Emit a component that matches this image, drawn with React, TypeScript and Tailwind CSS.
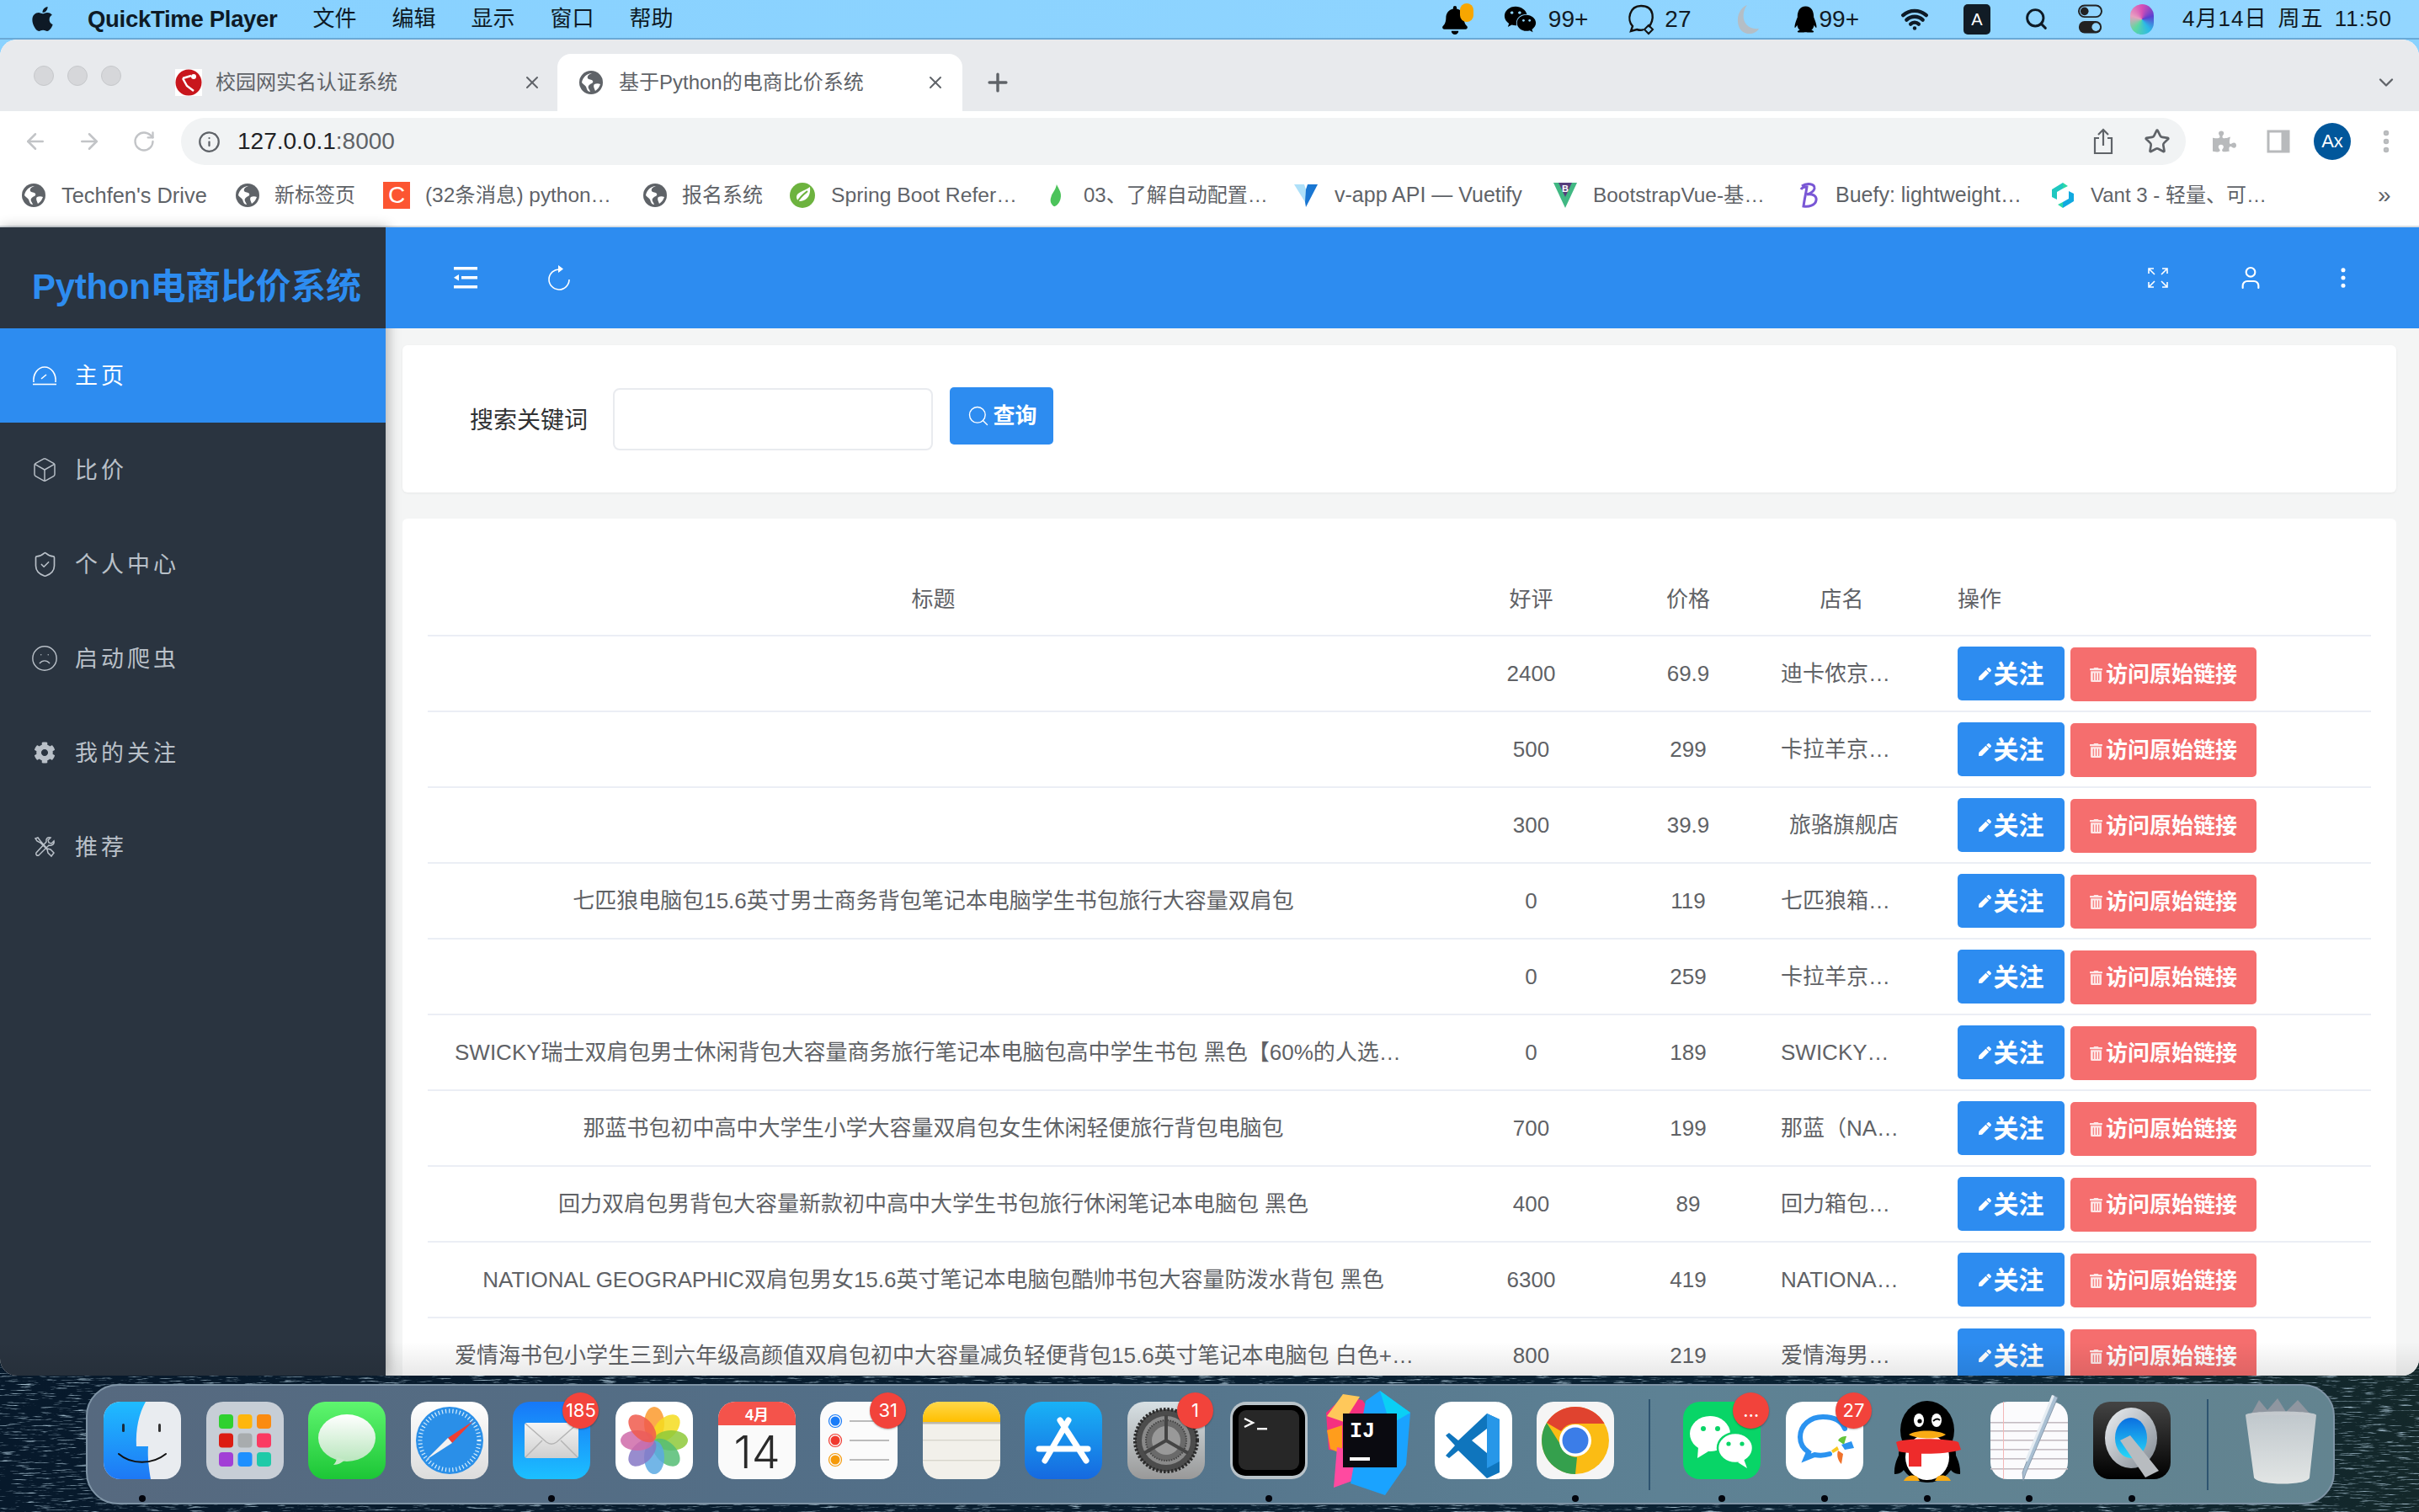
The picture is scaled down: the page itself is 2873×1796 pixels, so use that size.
import React from 'react';
import { Box, ShieldCheck, Frown, Star, MoreVertical, User, X, Plus, ChevronDown, ArrowLeft, ArrowRight, RotateCw, Info, Search, Wifi } from 'lucide-react';
import { FaApple, FaWeixin, FaQq, FaPuzzlePiece, FaCog, FaBell, FaTrashAlt, FaPen } from 'react-icons/fa';

const Globe = () => (
  <svg viewBox="0 0 28 28" className="w-[28px] h-[28px] shrink-0">
    <circle cx="14" cy="14" r="14" fill="#5f6368" />
    <path d="M15 3c-3 1-6 3-5 6 1 2 5 1 6 3s-1 3-3 4-3 3-2 5 2 3 2 4c-3 0-4-3-5-6-1-2-4-3-5-5 1-6 6-11 12-11zM18 16c2-1 5-1 7 0-1 3-3 6-6 8-1-3-3-6-1-8z" fill="#fff" />
  </svg>
);

const Spring = () => (
  <svg viewBox="0 0 32 32" className="w-[32px] h-[32px] shrink-0">
    <circle cx="16" cy="16" r="15" fill="#6db33f" />
    <path d="M25 6c1 8-2 16-11 17-3 0-5-2-5-5 0-6 8-6 16-12z" fill="#fff" />
    <path d="M10 24c3-6 7-9 12-13" stroke="#6db33f" strokeWidth="2" fill="none" />
  </svg>
);

const Leaf = () => (
  <svg viewBox="0 0 32 32" className="w-[30px] h-[32px] shrink-0">
    <path d="M17 2c2 5 7 10 5 18-1 5-4 9-8 10-4-2-6-7-4-12 1-5 6-9 7-16z" fill="#4cc35b" />
  </svg>
);

const Vuetify = () => (
  <svg viewBox="0 0 32 32" className="w-[32px] h-[32px] shrink-0">
    <path d="M2 3h12l4 12-3 9z" fill="#aee0f9" />
    <path d="M30 3H18l-2 6 0 0-1 15 1 6z" fill="#1976d2" />
  </svg>
);

const BVue = () => (
  <svg viewBox="0 0 30 32" className="w-[30px] h-[32px] shrink-0">
    <path d="M1 1h28L15 31z" fill="#41b883" />
    <path d="M7 1h16l-8 17z" fill="#563d7c" />
    <text x="15" y="12" fontSize="11" fontWeight="700" fill="#fff" textAnchor="middle">B</text>
  </svg>
);

const Buefy = () => (
  <svg viewBox="0 0 28 32" className="w-[28px] h-[32px] shrink-0">
    <path d="M6 5c6-4 16-3 15 3-1 4-6 6-9 7 6-1 12 1 11 7-1 6-9 8-15 7 1-8 3-16 4-23-3 0-6 1-7 3" fill="none" stroke="#7957d5" strokeWidth="3" />
  </svg>
);

const Vant = () => (
  <svg viewBox="0 0 30 32" className="w-[30px] h-[32px] shrink-0">
    <path d="M15 1v7l-7 4v9l-6-3V9z" fill="#1fc8c0" />
    <path d="M15 31v-7l7-4v-9l6 3v9z" fill="#10a9e0" />
    <path d="M15 1l6 4-6 3zM15 31l-6-4 6-3z" fill="#2bd8a8" />
  </svg>
);

const CIcon = () => (
  <div className="w-[32px] h-[32px] bg-[#fc5531] text-white text-[28px] leading-[32px] text-center shrink-0">C</div>
);

const bookmarks = [
  { icon: <Globe />, label: "Techfen's Drive", w: 'w-[254px]', s: 'text-[25.4px] ml-[1px]' },
  { icon: <Globe />, label: '新标签页', w: 'w-[175px]', s: 'text-[24px]' },
  { icon: <CIcon />, label: '(32条消息) python…', w: 'w-[309px]', s: 'text-[24.4px]' },
  { icon: <Globe />, label: '报名系统', w: 'w-[173px]', s: 'text-[24px]' },
  { icon: <Spring />, label: 'Spring Boot Refer…', w: 'w-[302px]', s: 'text-[24.7px]' },
  { icon: <Leaf />, label: '03、了解自动配置…', w: 'w-[296px]', s: 'text-[24px]' },
  { icon: <Vuetify />, label: 'v-app API — Vuetify', w: 'w-[309px]', s: 'text-[25px]' },
  { icon: <BVue />, label: 'BootstrapVue-基…', w: 'w-[290px]', s: 'text-[24.4px]' },
  { icon: <Buefy />, label: 'Buefy: lightweight…', w: 'w-[301px]', s: 'text-[25px]' },
  { icon: <Vant />, label: 'Vant 3 - 轻量、可…', w: 'w-[270px]', s: 'text-[24px]' },
];

const rows = [
  { t: '', g: '2400', p: '69.9', s: '迪卡侬京…' },
  { t: '', g: '500', p: '299', s: '卡拉羊京…' },
  { t: '', g: '300', p: '39.9', s: '旅骆旗舰店', c: true },
  { t: '七匹狼电脑包15.6英寸男士商务背包笔记本电脑学生书包旅行大容量双肩包', g: '0', p: '119', s: '七匹狼箱…' },
  { t: '', g: '0', p: '259', s: '卡拉羊京…' },
  { t: 'SWICKY瑞士双肩包男士休闲背包大容量商务旅行笔记本电脑包高中学生书包 黑色【60%的人选…', g: '0', p: '189', s: 'SWICKY…', l: true },
  { t: '那蓝书包初中高中大学生小学大容量双肩包女生休闲轻便旅行背包电脑包', g: '700', p: '199', s: '那蓝（NA…' },
  { t: '回力双肩包男背包大容量新款初中高中大学生书包旅行休闲笔记本电脑包 黑色', g: '400', p: '89', s: '回力箱包…' },
  { t: 'NATIONAL GEOGRAPHIC双肩包男女15.6英寸笔记本电脑包酷帅书包大容量防泼水背包 黑色', g: '6300', p: '419', s: 'NATIONA…' },
  { t: '爱情海书包小学生三到六年级高颜值双肩包初中大容量减负轻便背包15.6英寸笔记本电脑包 白色+…', g: '800', p: '219', s: '爱情海男…', l: true },
];

const Gauge = () => (
  <svg viewBox="0 0 30 24" className="w-[30px] h-[24px] shrink-0" fill="none" stroke="currentColor" strokeWidth="1.6">
    <path d="M2 20C1 10 7 2 15 2s14 8 13 18" />
    <path d="M1 22.5h28" />
    <path d="M11 16l6-5" />
  </svg>
);

const Tools = () => (
  <svg viewBox="0 0 26 26" className="w-[26px] h-[26px] shrink-0" fill="none" stroke="currentColor" strokeWidth="1.5">
    <path d="M2 3l3-1 3 4 8 9 4 1 4 4-3 4-4-4-1-4-8-8-4-2z" />
    <path d="M24 6l-3 3-3-1-1-3 3-3c-3-1-6 1-5 5L3 20c-1 2 1 4 3 3L18 11c3 1 7-1 6-5z" />
  </svg>
);

const nav = [
  { icon: <Gauge />, label: '主页', active: true },
  { icon: <Box size={32} strokeWidth={1.1} className="shrink-0" />, label: '比价' },
  { icon: <ShieldCheck size={33} strokeWidth={1.2} className="shrink-0" />, label: '个人中心' },
  { icon: <Frown size={34} strokeWidth={1} className="shrink-0" />, label: '启动爬虫' },
  { icon: <FaCog size={26} className="shrink-0" />, label: '我的关注' },
  { icon: <Tools />, label: '推荐' },
];

const Tile = ({ children, className = '' }: { children: React.ReactNode; className?: string }) => (
  <svg viewBox="0 0 92 92" className={'w-[92px] h-[92px] overflow-visible ' + className}>{children}</svg>
);

const Finder = () => (
  <Tile>
    <defs>
      <linearGradient id="fb" x1="0" y1="0" x2="0" y2="1"><stop offset="0" stopColor="#1fbcff" /><stop offset="1" stopColor="#1e78f5" /></linearGradient>
      <clipPath id="fc"><rect width="92" height="92" rx="20" /></clipPath>
    </defs>
    <g clipPath="url(#fc)">
      <rect width="92" height="92" fill="#e9ecf0" />
      <path d="M0 0h50C42 14 38 32 39 53h14c-1 13 1 27 3 39H0z" fill="url(#fb)" />
    </g>
    <rect x="22" y="26" width="3" height="10" rx="1.5" fill="#1a2a3a" />
    <rect x="65" y="26" width="3" height="10" rx="1.5" fill="#333" />
    <path d="M18 62c15 13 40 13 56 0" stroke="#111" strokeWidth="2" fill="none" strokeLinecap="round" />
  </Tile>
);

const Launchpad = () => {
  const c = ['#2fd12f', '#ffb60c', '#fb8b10', '#dc1c12', '#a8acae', '#fb3a62', '#a23fd6', '#1e90ff', '#1fcaa8'];
  return (
    <Tile>
      <rect width="92" height="92" rx="20" fill="#c7ced6" />
      {c.map((f, i) => (
        <rect key={i} x={15 + (i % 3) * 22.5} y={15 + Math.floor(i / 3) * 22.5} width="17" height="17" rx="4" fill={f} />
      ))}
    </Tile>
  );
};

const Messages = () => (
  <Tile>
    <defs>
      <linearGradient id="mg" x1="0" y1="0" x2="0" y2="1"><stop offset="0" stopColor="#5ff56f" /><stop offset="1" stopColor="#1cc636" /></linearGradient>
      <linearGradient id="mw" x1="0" y1="0" x2="0" y2="1"><stop offset="0" stopColor="#fff" /><stop offset="1" stopColor="#b9e6bd" /></linearGradient>
    </defs>
    <rect width="92" height="92" rx="20" fill="url(#mg)" />
    <ellipse cx="46" cy="43" rx="34" ry="28" fill="url(#mw)" />
    <path d="M34 66c0 4-2 7-4 9 6 0 10-3 14-6z" fill="#c6eac8" />
  </Tile>
);

const Safari = () => (
  <Tile>
    <defs><linearGradient id="sb" x1="0" y1="0" x2="0" y2="1"><stop offset="0" stopColor="#fff" /><stop offset="1" stopColor="#dcdcdc" /></linearGradient></defs>
    <rect width="92" height="92" rx="20" fill="url(#sb)" />
    <circle cx="46" cy="46" r="40" fill="#2a8fe8" />
    <circle cx="46" cy="46" r="35" fill="none" stroke="#d8eefc" strokeWidth="5" strokeDasharray="1.2 3" />
    <path d="M74 23L44 43l5 6z" fill="#ef3d32" />
    <path d="M18 69l26-26 5 6z" fill="#f2f2f2" />
  </Tile>
);

const Mail = () => (
  <Tile>
    <defs>
      <linearGradient id="mb" x1="0" y1="0" x2="0" y2="1"><stop offset="0" stopColor="#1778f8" /><stop offset="1" stopColor="#1cc0ff" /></linearGradient>
      <linearGradient id="me" x1="0" y1="0" x2="0" y2="1"><stop offset="0" stopColor="#f4f4f4" /><stop offset="1" stopColor="#cfcfcf" /></linearGradient>
    </defs>
    <rect width="92" height="92" rx="20" fill="url(#mb)" />
    <rect x="14" y="25" width="64" height="42" rx="3" fill="url(#me)" />
    <path d="M15 26l25 22c4 3 8 3 12 0l25-22M15 66l20-20M77 66L57 46" stroke="#b4b4b4" strokeWidth="1.5" fill="none" />
  </Tile>
);

const Photos = () => {
  const c = ['#fb9a2d', '#f5dc1e', '#8ec93a', '#55bd74', '#5ba9e3', '#8678c6', '#cf6ba9', '#f05a4c'];
  return (
    <Tile>
      <rect width="92" height="92" rx="20" fill="#fff" />
      {c.map((f, i) => (
        <ellipse key={i} cx="46" cy="26" rx="12" ry="20" fill={f} opacity="0.85" transform={`rotate(${i * 45} 46 46)`} />
      ))}
    </Tile>
  );
};

const Calendar = () => (
  <Tile>
    <defs><clipPath id="cc"><rect width="92" height="92" rx="20" /></clipPath></defs>
    <g clipPath="url(#cc)">
      <rect width="92" height="92" fill="#fafafa" />
      <rect width="92" height="28" fill="#f4534b" />
    </g>
    <text x="46" y="22" fontSize="18" fontWeight="700" fill="#fff" textAnchor="middle">4月</text>
    <text x="46" y="79" fontSize="54" fill="#2a2a2a" textAnchor="middle" fontWeight="300" fontFamily="Inter">14</text>
  </Tile>
);

const Reminders = () => (
  <Tile>
    <rect width="92" height="92" rx="20" fill="#fbfbfb" />
    {[['#1a7cf8', 23], ['#f0392f', 46], ['#f59a0a', 69]].map(([c, y]) => (
      <g key={String(c)}>
        <circle cx="18" cy={y as number} r="7.5" fill="none" stroke={c as string} strokeWidth="1.2" />
        <circle cx="18" cy={y as number} r="5.5" fill={c as string} />
        <rect x="35" y={(y as number) - 1} width="47" height="2" fill="#bbb" />
      </g>
    ))}
  </Tile>
);

const Notes = () => (
  <Tile>
    <defs><clipPath id="nc"><rect width="92" height="92" rx="20" /></clipPath>
      <linearGradient id="ny" x1="0" y1="0" x2="0" y2="1"><stop offset="0" stopColor="#ffd84a" /><stop offset="1" stopColor="#ffbf00" /></linearGradient></defs>
    <g clipPath="url(#nc)">
      <rect width="92" height="92" fill="#f2f0ea" />
      <rect width="92" height="24" fill="url(#ny)" />
      <rect y="24" width="92" height="2.5" fill="#bdb8a8" />
      <rect y="45" width="92" height="1.4" fill="#d8d5cc" />
      <rect y="69" width="92" height="1.4" fill="#d8d5cc" />
    </g>
  </Tile>
);

const AppStore = () => (
  <Tile>
    <defs><linearGradient id="ab" x1="0" y1="0" x2="0" y2="1"><stop offset="0" stopColor="#19b2f6" /><stop offset="1" stopColor="#1669e0" /></linearGradient></defs>
    <rect width="92" height="92" rx="20" fill="url(#ab)" />
    <path d="M52 22L24 70M42 22l31 48M17 56h58" stroke="#fff" strokeWidth="7" strokeLinecap="round" fill="none" />
  </Tile>
);

const SysPrefs = () => (
  <Tile>
    <defs><linearGradient id="sp" x1="0" y1="0" x2="0" y2="1"><stop offset="0" stopColor="#d7e0e4" /><stop offset="1" stopColor="#999" /></linearGradient></defs>
    <rect width="92" height="92" rx="20" fill="url(#sp)" />
    <circle cx="46" cy="46" r="37" fill="#4c4c4c" stroke="#2a2a2a" strokeWidth="4" strokeDasharray="2.5 2" />
    <circle cx="46" cy="46" r="29" fill="#8a8a8a" />
    <circle cx="46" cy="46" r="24" fill="#6a6a6a" stroke="#444" strokeWidth="2" strokeDasharray="1.5 1.5" />
    <circle cx="46" cy="46" r="17" fill="#999" />
    <path d="M46 46L46 16M46 46L72 61M46 46L20 61" stroke="#444" strokeWidth="4" />
  </Tile>
);

const Terminal = () => (
  <Tile>
    <rect width="92" height="92" rx="19" fill="#b9c3c9" />
    <rect x="3" y="4" width="86" height="84" rx="15" fill="#000" />
    <rect x="10" y="10" width="72" height="71" rx="9" fill="#272727" />
    <path d="M17 20l10 5-10 5" stroke="#fff" strokeWidth="2.4" fill="none" />
    <rect x="32" y="31" width="12" height="2.4" fill="#fff" />
  </Tile>
);

const IJ = () => (
  <Tile>
    <path d="M-7 13L14-6l22 4 10 14-20 50-30-5z" fill="#f5317f" />
    <path d="M-6 17L13-9l20 3L14 24z" fill="#ffc85a" />
    <path d="M-6 34l18-6 0 34-14-6z" fill="#ff9d1c" />
    <path d="M6 54l46 10-28 30L2 102z" fill="#ff4aa0" />
    <path d="M40-1l17-12 36 26-5 62-25 36-41-14z" fill="#1aa3ff" />
    <path d="M57-13l36 26-24 14z" fill="#0bd0f5" />
    <rect x="13" y="14" width="64" height="64" fill="#0a0a10" />
    <text x="21" y="42" fontSize="25" fontWeight="700" fill="#fff" fontFamily="Liberation Mono">IJ</text>
    <rect x="21" y="66" width="24" height="4" fill="#fff" />
  </Tile>
);

const VSCode = () => (
  <Tile>
    <rect width="92" height="92" rx="20" fill="#fff" />
    <path d="M62 14L28 46l-11-9-4 3 11 12-11 12 4 3 11-9 34 33 15-7V21z" fill="#0f75bd" />
    <path d="M62 14l15 7v50l-15 8 0-19V32z" fill="#2797e8" />
    <path d="M62 32L44 46l18 15z" fill="#fff" />
  </Tile>
);

const Chrome = () => (
  <Tile>
    <rect width="92" height="92" rx="20" fill="#f5f5f5" />
    <circle cx="46" cy="46" r="40" fill="#fbbc14" />
    <path d="M46 6a40 40 0 0 1 34.6 20H46a20 20 0 0 0-17 9L12 25A40 40 0 0 1 46 6z" fill="#e0432f" />
    <path d="M12 25l17 27a20 20 0 0 0 19 14L46 86A40 40 0 0 1 12 25z" fill="#35a04d" />
    <circle cx="46" cy="46" r="19" fill="#fff" />
    <circle cx="46" cy="46" r="15.5" fill="#3b7de8" />
  </Tile>
);

const WeChat = () => (
  <Tile>
    <rect width="92" height="92" rx="20" fill="#08d567" />
    <ellipse cx="32" cy="38" rx="24" ry="21" fill="#fff" />
    <path d="M18 54l-1 13 13-8z" fill="#fff" />
    <circle cx="24" cy="32" r="3" fill="#08d567" /><circle cx="41" cy="32" r="3" fill="#08d567" />
    <ellipse cx="62" cy="55" rx="21" ry="18" fill="#fff" stroke="#08d567" strokeWidth="2.5" />
    <path d="M72 68l4 11-11-7z" fill="#fff" />
    <circle cx="54" cy="50" r="2.6" fill="#08d567" /><circle cx="70" cy="50" r="2.6" fill="#08d567" />
  </Tile>
);

const Qiye = () => (
  <Tile>
    <rect width="92" height="92" rx="20" fill="#fff" />
    <path d="M70 32C66 22 56 18 44 18c-15 0-27 10-27 24 0 8 4 14 10 18l-3 7 10-4c6 1 12 1 18-1" fill="none" stroke="#2b93f0" strokeWidth="6" strokeLinecap="round" />
    <path d="M62 46c2-4 6-5 10-5l-3 10z" fill="#64c43a" />
    <path d="M66 51l12-4 3 8-11 2z" fill="#2b93f0" />
    <path d="M62 58l6 4-2 12c-4-4-6-10-4-16z" fill="#f0722b" />
    <path d="M54 58l7-5 2 4-7 4z" fill="#f9c820" />
  </Tile>
);

const QQ = () => (
  <Tile>
    <ellipse cx="46" cy="34" rx="32" ry="35" fill="#000" />
    <path d="M20 50c-8 12-14 24-13 36 8 0 12-5 14-10zM72 50c8 12 14 24 13 36-8 0-12-5-14-10z" fill="#000" />
    <ellipse cx="46" cy="62" rx="34" ry="34" fill="#000" />
    <ellipse cx="46" cy="66" rx="26" ry="27" fill="#fff" />
    <path d="M9 48c10-5 60-5 74 0l3 9c-20 6-55 6-74 2z" fill="#ee2b2b" />
    <rect x="24" y="56" width="15" height="21" fill="#ee2b2b" />
    <path d="M18 94c3-6 10-8 16-5l3 5zM74 94c-3-6-10-8-16-5l-3 5z" fill="#f9ab14" />
    <ellipse cx="36" cy="22" rx="6" ry="8" fill="#fff" /><ellipse cx="57" cy="22" rx="6" ry="8" fill="#fff" />
    <circle cx="37" cy="23" r="2.6" fill="#000" />
    <path d="M53 23c3-3 6-3 8-1" stroke="#000" strokeWidth="1.8" fill="none" />
    <path d="M24 39c10-6 34-6 44 0-8 6-34 6-44 0z" fill="#f9ab14" />
  </Tile>
);

const TextEdit = () => (
  <Tile>
    <rect width="92" height="92" rx="20" fill="#fbfbfd" />
    {[24, 34, 45, 56, 67, 79].map((y) => <rect key={y} y={y} width="92" height="1.6" fill="#c3bcc2" />)}
    <rect x="15" width="1" height="92" fill="#f3b7b7" />
    <path d="M74-8l6 3-38 90-3 9-1-10z" fill="#a9bfd2" stroke="#7a8d9f" strokeWidth="0.8" />
    <path d="M73-8l3 1-32 78-3-1z" fill="#e6edf3" />
  </Tile>
);

const QuickTime = () => (
  <Tile>
    <defs>
      <linearGradient id="qb" x1="0" y1="0" x2="0" y2="1"><stop offset="0" stopColor="#444" /><stop offset="1" stopColor="#000" /></linearGradient>
      <linearGradient id="qr" x1="0" y1="0" x2="1" y2="1"><stop offset="0" stopColor="#eef1f4" /><stop offset="1" stopColor="#7f8790" /></linearGradient>
      <linearGradient id="qi" x1="0" y1="0" x2="0" y2="1"><stop offset="0" stopColor="#0b6fe0" /><stop offset="1" stopColor="#27d8f8" /></linearGradient>
    </defs>
    <rect width="92" height="92" rx="20" fill="url(#qb)" />
    <ellipse cx="45" cy="43" rx="31" ry="36" fill="url(#qr)" />
    <ellipse cx="45" cy="43" rx="19" ry="24" fill="url(#qi)" />
    <path d="M44 40l34 42-16 8-30-44z" fill="#b8bcc0" />
  </Tile>
);

const Trash = () => (
  <svg viewBox="0 0 84 104" className="w-[84px] h-[104px] -mt-[6px]">
    <defs><linearGradient id="tg" x1="0" y1="0" x2="0" y2="1"><stop offset="0" stopColor="#c9ced2" /><stop offset="1" stopColor="#f0f0ee" /></linearGradient></defs>
    <path d="M6 22l10-18 10 12 12-14 10 16 14-14 16 18z" fill="#8f96a0" />
    <path d="M0 22c0-6 84-6 84 0l-8 74c-1 10-62 10-66 0z" fill="url(#tg)" opacity="0.9" />
  </svg>
);

const Badge = ({ children }: { children: React.ReactNode }) => (
  <div className="absolute -right-[10px] -top-[11px] w-[43px] h-[43px] rounded-full bg-[#f2433b] text-white text-[22px] leading-[43px] text-center shadow-[0_1px_2px_rgba(0,0,0,.3)] font-['Inter',sans-serif]">
    {children}
  </div>
);

const Dot = () => (
  <div className="absolute left-[42px] top-[111px] w-[8px] h-[8px] rounded-full bg-[#02040c]" />
);

const DockItem = ({ children, badge, dot }: { children: React.ReactNode; badge?: string; dot?: boolean }) => (
  <div className="relative w-[92px] h-[92px] shrink-0">
    {children}
    {badge && <Badge>{badge}</Badge>}
    {dot && <Dot />}
  </div>
);

const StatusNum = ({ children, className = '' }: { children: React.ReactNode; className?: string }) => (
  <span className={'text-[28px] text-[#111a24] ' + className}>{children}</span>
);

export default function App() {
  return (
    <div className="relative w-[2873px] h-[1796px] overflow-hidden bg-[#8ad2ff] font-['Liberation_Sans','Noto_Sans_CJK_SC',sans-serif]">
      {/* wallpaper */}
      <svg className="absolute left-0 bottom-0 w-[2873px] h-[230px]">
        <defs>
          <filter id="water" x="0" y="0" width="100%" height="100%">
            <feTurbulence type="fractalNoise" baseFrequency="0.045 0.55" numOctaves="4" seed="11" />
            <feColorMatrix type="matrix" values="0 0 0 0 0.36  0 0 0 0 0.5  0 0 0 0 0.6  3.4 0 0 0 -1.95" />
          </filter>
          <linearGradient id="wall" x1="0" y1="0" x2="1" y2="0">
            <stop offset="0" stopColor="#07192b" /><stop offset="0.8" stopColor="#0a2233" /><stop offset="1" stopColor="#14282a" />
          </linearGradient>
        </defs>
        <rect width="2873" height="230" fill="url(#wall)" />
        <rect width="2873" height="230" filter="url(#water)" />
      </svg>

      {/* menu bar */}
      <div className="relative h-[47px] flex items-center bg-[linear-gradient(90deg,#87d1ff,#93d6ff)] border-b-[2px] border-[#6aa9d6] text-[#0e1a26]">
        <FaApple className="ml-[35px] w-[31px] h-[33px] text-[#0e1a26]" />
        <span className="ml-[38px] text-[27.5px] font-bold tracking-[-0.3px]">QuickTime Player</span>
        <div className="ml-[42px] flex gap-[42px] text-[26px]">
          <span>文件</span><span>编辑</span><span>显示</span><span>窗口</span><span>帮助</span>
        </div>
        <div className="ml-auto pr-[31px] flex items-center">
          <div className="relative w-[39px] h-[38px] mr-[36px]">
            <FaBell className="w-[34px] h-[34px] mt-[3px] text-black" />
            <div className="absolute right-0 top-0 w-[16px] h-[22px] rounded-full bg-[#f8a600]" />
          </div>
          <FaWeixin className="w-[39px] h-[38px] text-black mr-[14px]" />
          <StatusNum className="mr-[46px]">99+</StatusNum>
          <svg viewBox="0 0 36 38" className="w-[36px] h-[38px] mr-[9px]" fill="none" stroke="#111" strokeWidth="2.4">
            <path d="M26 28c7-7 8-25-9-25C3 3 0 20 7 27l-2 6 7-2c3 1 6 1 8 0" />
            <path d="M26 26l5 5-5 5-5-5z" strokeWidth="2" />
          </svg>
          <StatusNum className="mr-[54px]">27</StatusNum>
          <svg viewBox="0 0 26 38" className="w-[26px] h-[38px] mr-[42px]"><path d="M12 2C4 12 6 32 26 30 20 40 2 38 1 22 0 12 6 4 12 2z" fill="#b4bec6" /></svg>
          <FaQq className="w-[27px] h-[36px] text-black mr-[3px]" />
          <StatusNum className="mr-[48px]">99+</StatusNum>
          <Wifi className="w-[36px] h-[33px] mr-[40px]" strokeWidth={3.2} />
          <div className="w-[32px] h-[36px] rounded-[5px] bg-[#111c26] text-white text-[20px] leading-[36px] text-center mr-[40px]">A</div>
          <Search className="w-[29px] h-[31px] mr-[35px]" strokeWidth={2.4} />
          <svg viewBox="0 0 30 36" className="w-[29px] h-[36px] mr-[33px]">
            <rect x="1" y="1" width="28" height="14" rx="7" fill="none" stroke="#222" strokeWidth="2" /><circle cx="8" cy="8" r="5" fill="#222" />
            <rect x="1" y="20" width="28" height="15" rx="7" fill="#222" /><circle cx="22" cy="27.5" r="5" fill="#93d6ff" />
          </svg>
          <div className="w-[28px] h-[36px] rounded-full bg-[conic-gradient(#d64fb5,#5a3fd0,#2bb8e8,#5fd8a0,#e8a0c0,#d64fb5)] mr-[34px]" />
          <span className="text-[26px] text-[#111a24] w-[250px] whitespace-nowrap tracking-[1px] [word-spacing:5px]">4月14日 周五 11:50</span>
        </div>
      </div>

      {/* window */}
      <div className="relative h-[1587px] rounded-[20px] overflow-hidden flex flex-col bg-white">
        {/* tabs */}
        <div className="h-[85px] bg-[#e8eaed] flex items-end shrink-0">
          <div className="w-[208px] h-full flex items-center gap-[16px] pl-[40px]">
            <div className="w-[24px] h-[24px] rounded-full bg-[#d6d7da] border border-[#c6c8cb]" />
            <div className="w-[24px] h-[24px] rounded-full bg-[#d6d7da] border border-[#c6c8cb]" />
            <div className="w-[24px] h-[24px] rounded-full bg-[#d6d7da] border border-[#c6c8cb]" />
          </div>
          <div className="w-[454px] h-[68px] flex items-center">
            <svg viewBox="0 0 32 32" className="w-[32px] h-[32px] shrink-0">
              <rect width="32" height="32" fill="#fff" />
              <circle cx="16" cy="16" r="15.5" fill="#c8161d" />
              <path d="M9 11l10-3M9 11l5 9 8 6" stroke="#fff" strokeWidth="2.5" fill="none" />
              <circle cx="22" cy="9" r="3" fill="#fff" />
            </svg>
            <span className="ml-[16px] text-[24px] text-[#5f6368]">校园网实名认证系统</span>
            <X className="ml-auto mr-[18px] w-[24px] h-[24px] text-[#5f6368]" strokeWidth={2} />
          </div>
          <div className="w-[481px] h-[68px] bg-white rounded-t-[16px] flex items-center pl-[26px]">
            <Globe />
            <span className="ml-[19px] text-[24px] text-[#5f6368] whitespace-nowrap">基于Python的电商比价系统</span>
            <X className="ml-auto mr-[20px] w-[24px] h-[24px] text-[#5f6368]" strokeWidth={2} />
          </div>
          <div className="h-[68px] flex items-center ml-[25px]">
            <Plus className="w-[34px] h-[34px] text-[#5f6368]" strokeWidth={2.4} />
          </div>
          <div className="h-[68px] flex items-center ml-auto pr-[25px]">
            <ChevronDown className="w-[28px] h-[28px] text-[#5f6368]" />
          </div>
        </div>

        {/* toolbar */}
        <div className="h-[64px] pt-[8px] flex items-start shrink-0 bg-white">
          <div className="w-[215px] h-[56px] flex items-center text-[#c2c4c7]">
            <ArrowLeft className="ml-[27px] w-[30px] h-[30px]" strokeWidth={2} />
            <ArrowRight className="ml-[34px] w-[30px] h-[30px]" strokeWidth={2} />
            <RotateCw className="ml-[36px] w-[28px] h-[28px]" strokeWidth={2} />
          </div>
          <div className="w-[2381px] h-[56px] rounded-full bg-[#f1f3f4] flex items-center pl-[20px] pr-[18px]">
            <Info className="w-[27px] h-[27px] text-[#5f6368]" strokeWidth={2} />
            <span className="ml-[20px] text-[28px] text-[#202124]">127.0.0.1<span className="text-[#5f6368]">:8000</span></span>
            <svg viewBox="0 0 24 32" className="ml-auto w-[24px] h-[32px]" fill="none" stroke="#5f6368" strokeWidth="2.2">
              <path d="M7 12H2v18h20V12h-5M12 21V2M6 8l6-6 6 6" />
            </svg>
            <Star className="ml-[36px] w-[32px] h-[32px] text-[#5f6368]" strokeWidth={2} />
          </div>
          <div className="flex-1 h-[56px] flex items-center text-[#b8babc]">
            <FaPuzzlePiece className="ml-[32px] w-[28px] h-[28px]" />
            <svg viewBox="0 0 28 28" className="ml-[36px] w-[28px] h-[28px]" fill="none" stroke="#b8babc"><rect x="2" y="2" width="24" height="24" strokeWidth="3" /><rect x="18" y="2" width="8" height="24" fill="#b8babc" /></svg>
            <div className="ml-[28px] w-[44px] h-[44px] rounded-full bg-[#01579b] text-white text-[22px] leading-[44px] text-center">Ax</div>
            <MoreVertical className="ml-[25px] w-[34px] h-[34px]" strokeWidth={2.6} />
          </div>
        </div>

        {/* bookmarks */}
        <div className="h-[74px] shrink-0 flex items-center pl-[26px] bg-white border-b-2 border-[#d9dee3]">
          {bookmarks.map((b) => (
            <div key={b.label} className={'flex items-center gap-[18px] shrink-0 ' + b.w}>
              {b.icon}
              <span className={'text-[#5f6368] whitespace-nowrap ' + b.s}>{b.label}</span>
            </div>
          ))}
          <span className="ml-[119px] text-[28px] text-[#5f6368]">»</span>
        </div>

        {/* app */}
        <div className="relative flex-1 flex min-h-0">
          <aside className="relative z-10 w-[458px] shrink-0 bg-[#2a3440] shadow-[3px_0_14px_rgba(0,0,0,.28)]">
            <div className="h-[120px] flex items-center pl-[38px] pt-[20px] text-[42px] font-bold text-[#2d8cf0] whitespace-nowrap tracking-[-0.3px]">Python电商比价系统</div>
            {nav.map((n) => (
              <div key={n.label} className={'h-[112px] flex items-center pl-[38px] ' + (n.active ? 'bg-[#2d8cf0] text-white' : 'text-[#b9c0c8]')}>
                <div className="w-[30px] flex justify-center">{n.icon}</div>
                <span className="ml-[21px] mt-[2px] text-[27px] tracking-[4px]">{n.label}</span>
              </div>
            ))}
          </aside>
          <div className="flex-1 min-w-0 flex flex-col">
            <header className="relative z-20 h-[120px] shrink-0 bg-[#2d8cf0] flex items-center text-white">
              <svg viewBox="0 0 28 26" className="ml-[81px] w-[28px] h-[26px]" fill="#fff">
                <rect width="28" height="3.5" /><rect x="9" y="11" width="19" height="3.5" /><rect y="22" width="28" height="3.5" /><path d="M0 12.7L6 9v7.5z" />
              </svg>
              <svg viewBox="0 0 28 30" className="ml-[82px] w-[28px] h-[30px]" fill="none" stroke="#fff" strokeWidth="1.6">
                <path d="M16 5a12 12 0 1 0 11 12" /><path d="M14 0l6 4.5-6 4.5z" fill="#fff" stroke="none" />
              </svg>
              <svg viewBox="0 0 26 26" className="ml-auto w-[26px] h-[26px]" fill="none" stroke="#fff" strokeWidth="1.6">
                <path d="M2 8V2h6M2 2l7 7M24 8V2h-6M24 2l-7 7M2 18v6h6M2 24l7-7M24 18v6h-6M24 24l-7-7" />
              </svg>
              <User className="ml-[81px] w-[32px] h-[32px]" strokeWidth={1.6} />
              <MoreVertical className="ml-[78px] mr-[74px] w-[32px] h-[32px]" strokeWidth={1.8} />
            </header>
            <main className="flex-1 min-h-0 bg-[#f4f5f5] pt-[20px] pl-[20px] pr-[27px] flex flex-col gap-[31px]">
              <div className="h-[175px] shrink-0 bg-white rounded-[6px] shadow-[0_1px_3px_rgba(0,0,0,.06)] flex items-start pl-[80px] pt-[50px]">
                <span className="mt-[19px] text-[28px] text-[#303133] whitespace-nowrap">搜索关键词</span>
                <div className="ml-[30px] mt-px w-[380px] h-[74px] rounded-[8px] border-2 border-[#e9ebef] bg-white" />
                <button className="ml-[20px] w-[123px] h-[68px] rounded-[5px] bg-[#2d8cf0] text-white text-[26px] font-bold flex items-center justify-center gap-[4px]">
                  <Search className="w-[28px] h-[30px]" strokeWidth={1.2} />
                  查询
                </button>
              </div>
              <div className="flex-1 min-h-0 overflow-hidden bg-white rounded-t-[6px] pt-[51px] px-[30px]">
                <div className="grid grid-cols-[1201px_219px_154px_211px_1fr] h-[89px] pt-[3px] items-center border-b-2 border-[#ebeef5] text-[26px] text-[#606266]">
                  <div className="text-center">标题</div>
                  <div className="text-center">好评</div>
                  <div className="text-center">价格</div>
                  <div className="text-center">店名</div>
                  <div className="pl-[32px]">操作</div>
                </div>
                {rows.map((r, i) => (
                  <div key={i} className="grid grid-cols-[1201px_219px_154px_211px_1fr] h-[90px] items-center border-b-2 border-[#ebeef5] text-[26px] text-[#606266]">
                    <div className={(r.l ? 'pl-[32px]' : 'text-center') + ' whitespace-nowrap overflow-hidden'}>{r.t}</div>
                    <div className="text-center">{r.g}</div>
                    <div className="text-center">{r.p}</div>
                    <div className={r.c ? 'text-center pl-[5px]' : 'pl-[33px] whitespace-nowrap'}>{r.s}</div>
                    <div className="pl-[32px] flex items-center gap-[7px]">
                      <button className="w-[127px] h-[64px] rounded-[5px] bg-[#2d8cf0] text-white text-[30px] font-bold flex items-center justify-center gap-[3px]">
                        <FaPen className="w-[15px] h-[15px]" />关注
                      </button>
                      <button className="w-[221px] h-[64px] mt-[2px] rounded-[5px] bg-[#f56e6e] text-white text-[26px] font-bold flex items-center justify-center gap-[4px]">
                        <FaTrashAlt className="w-[15px] h-[19px] text-[#fde6e6]" />访问原始链接
                      </button>
                    </div>
                  </div>
                ))}
              </div>
            </main>
          </div>
          <div className="absolute z-30 left-0 right-0 bottom-0 h-[40px] bg-[linear-gradient(180deg,rgba(0,0,0,0),rgba(0,0,0,.09))]" />
        </div>
      </div>

      {/* dock */}
      <div className="relative mt-[10px] ml-[102px] w-[2671px] h-[143px] rounded-[38px] border-2 border-[#7f94a6] bg-[linear-gradient(90deg,#56697f,#527089_40%,#5d8194_70%,#638490)] flex items-start pl-[19px] pt-[19px]">
        <div className="flex gap-[29.6px]">
          <DockItem dot><Finder /></DockItem>
          <DockItem><Launchpad /></DockItem>
          <DockItem><Messages /></DockItem>
          <DockItem><Safari /></DockItem>
          <DockItem badge="185" dot><Mail /></DockItem>
          <DockItem><Photos /></DockItem>
          <DockItem><Calendar /></DockItem>
          <DockItem badge="31"><Reminders /></DockItem>
          <DockItem><Notes /></DockItem>
          <DockItem><AppStore /></DockItem>
          <DockItem badge="1"><SysPrefs /></DockItem>
          <DockItem dot><Terminal /></DockItem>
          <DockItem><IJ /></DockItem>
          <DockItem><VSCode /></DockItem>
          <DockItem dot><Chrome /></DockItem>
        </div>
        <div className="ml-[41px] -mt-[3px] w-[2px] h-[108px] bg-[#2e5470] shrink-0" />
        <div className="ml-[39px] flex gap-[29.6px]">
          <DockItem badge="…" dot><WeChat /></DockItem>
          <DockItem badge="27" dot><Qiye /></DockItem>
          <DockItem dot><QQ /></DockItem>
          <DockItem dot><TextEdit /></DockItem>
          <DockItem dot><QuickTime /></DockItem>
        </div>
        <div className="ml-[43px] -mt-[3px] w-[2px] h-[108px] bg-[#2e5470] shrink-0" />
        <div className="ml-[44px]"><Trash /></div>
      </div>
    </div>
  );
}
